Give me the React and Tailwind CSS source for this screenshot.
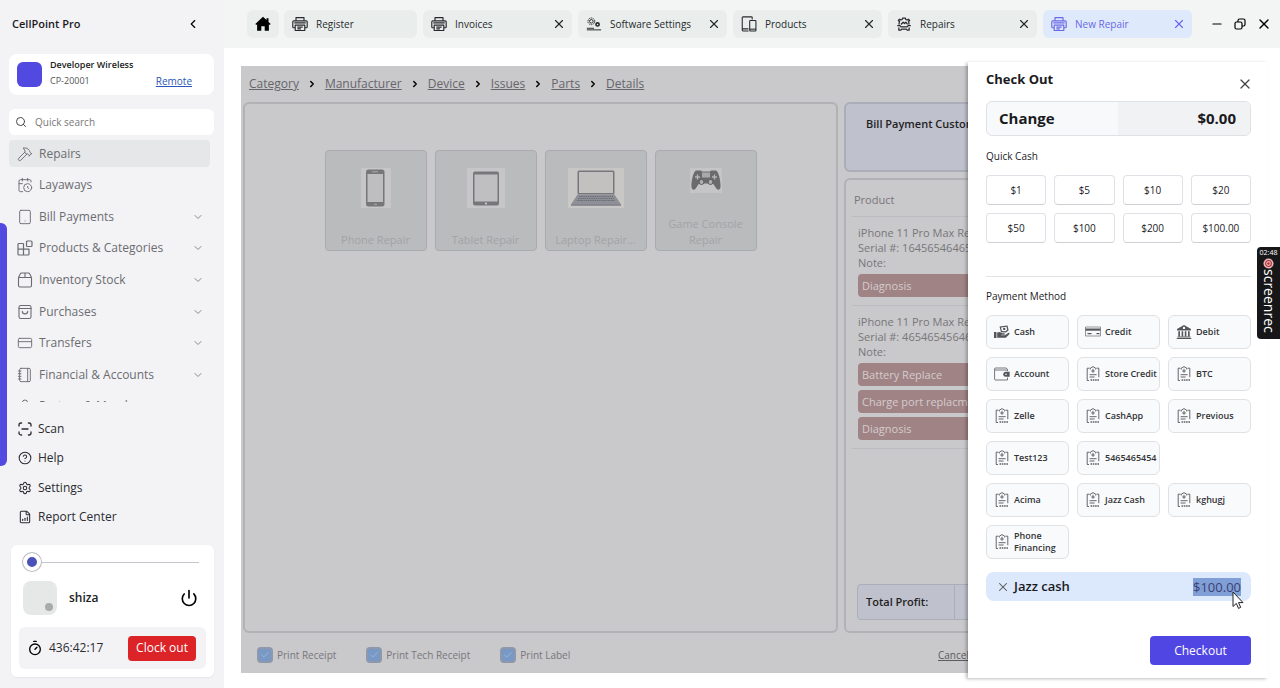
import React, { useState } from 'react';
import {
    CalendarClock, Check, ChevronDown, ChevronLeft, ChevronRight, CreditCard,
    FileChartColumnIncreasing, CircleHelp, Hammer, Minus, Notebook, Power,
    Search, Settings, Tablet, Timer, User, X,
} from 'lucide-react';

const PrinterIcon = ({ className }) => (
    <svg viewBox="0 0 18 18" className={className} fill="none" stroke="currentColor" strokeWidth="1.3" strokeLinejoin="round">
        <path d="M4.5 5.5V1.8h9v3.7M3.6 13.2H1.8a.9.9 0 0 1-.9-.9V6.6c0-.6.5-1.1 1.1-1.1h14c.6 0 1.1.5 1.1 1.1v5.7a.9.9 0 0 1-.9.9h-1.8" />
        <path d="M3.6 10.3h10.8v6H3.6zM6 12.6h6M6 14.4h4M2.6 7.8h12.8" />
    </svg>
);

const GearsIcon = ({ className }) => (
    <svg viewBox="0 0 18 18" className={className} fill="none" stroke="currentColor" strokeWidth="1.1">
        <circle cx="6" cy="6" r="3.8" strokeDasharray="1.6 .8" />
        <circle cx="6" cy="6" r="2" />
        <circle cx="13" cy="9.5" r="1.8" strokeWidth="1.8" />
        <path d="M1 13.8h8M1 15.6h16" />
    </svg>
);

const DevicesIcon = ({ className }) => (
    <svg viewBox="0 0 18 18" className={className} fill="none" stroke="currentColor" strokeWidth="1.2">
        <path d="M8.5 16.8H2.2a.8.8 0 0 1-.8-.8V1.8c0-.4.4-.8.8-.8h9.6c.4 0 .8.4.8.8V4M1.4 14.5h7" />
        <rect x="9.8" y="5" width="7" height="11.8" rx=".6" />
        <path d="M9.8 14.8h7" />
    </svg>
);

const RepairIcon = ({ className }) => (
    <svg viewBox="0 0 18 18" className={className} fill="none" stroke="currentColor" strokeWidth="1.4" strokeLinejoin="round">
        <path d="M3.5 9.8a5.6 5.6 0 0 1 .5-3.600L2.600 5.100l1.500-1.500 1.400.9 1.400-.6.5-1.500h3.200l.5 1.500 1.400.6 1.400-.9 1.500 1.500L14 6.200a5.600 5.600 0 0 1 .5 3.600" />
        <path d="M5.500 9.500 8 7l1.500 1.500L11 7l2 2.500M1.400 10.800h3l1.200 1.500h6.800l1.200-1.500h3M3.200 13v3h2.200l1-1.200h5.200l1 1.200h2.200v-3" />
    </svg>
);

const HomeIcon = ({ className }) => (
    <svg viewBox="0 0 16 16" className={className} fill="currentColor">
        <path d="M8 .8 11.5 4V2.200h2v3.700l2.200 2-1 1.100-.8-.7v6.500H9.700v-4.500H6.300v4.500H2.100V8.300l-.8.700-1-1.100z" />
    </svg>
);

const RestoreIcon = ({ className }) => (
    <svg viewBox="0 0 12 12" className={className} fill="none" stroke="currentColor" strokeWidth="1.2">
        <rect x="1" y="4" width="7" height="7" rx="1.5" />
        <path d="M4 4V2.500C4 1.700 4.700 1 5.500 1h4c.8 0 1.500.7 1.500 1.500v4c0 .8-.7 1.500-1.500 1.500H8" />
    </svg>
);

const ScanIcon = ({ className }) => (
    <svg viewBox="0 0 14 14" className={className} fill="none" stroke="currentColor" strokeWidth="1.3" strokeLinecap="round">
        <path d="M1 4V3a2 2 0 0 1 2-2h.6M10.400 1h.6a2 2 0 0 1 2 2v1M13 10v1a2 2 0 0 1-2 2h-.6M3.600 13H3a2 2 0 0 1-2-2v-1M4 7h6" />
    </svg>
);

const BlocksIcon = ({ className }) => (
    <svg viewBox="0 0 16 16" className={className} fill="none" stroke="currentColor" strokeWidth="1.2" strokeLinejoin="round">
        <rect x="9.5" y="1" width="5.5" height="5.5" rx="1" />
        <path d="M6.500 3.500H2a1 1 0 0 0-1 1V14a1 1 0 0 0 1 1h9a1 1 0 0 0 1-1V9.200H1M6.500 3.500V15" />
    </svg>
);

const BoxIcon = ({ className }) => (
    <svg viewBox="0 0 16 16" className={className} fill="none" stroke="currentColor" strokeWidth="1.1" strokeLinejoin="round">
        <path d="M1.500 5.500v8a1.500 1.500 0 0 0 1.500 1.500h10a1.500 1.500 0 0 0 1.500-1.500v-8M1.500 5.500h13M1.500 5.500l1.700-3.600A1.500 1.500 0 0 1 4.500 1h7a1.500 1.500 0 0 1 1.300.9l1.700 3.600M8 1v4.500" />
    </svg>
);

const BagIcon = ({ className }) => (
    <svg viewBox="0 0 16 16" className={className} fill="none" stroke="currentColor" strokeWidth="1.1" strokeLinecap="round">
        <rect x="2" y="1.5" width="12" height="13" rx="1.8" />
        <path d="M2 4.500h12M5.300 7.200a2.700 2.700 0 0 0 5.400 0" />
    </svg>
);

const CashIcon = ({ className }) => (
    <svg viewBox="0 0 16 14" className={className} fill="currentColor">
        <path d="M5.500 1.500 13.500.4l1.100 4.800-2.600 2.200-5-.2zM7 2.500l.9 3.500 3.600.2 1.700-1.500-.7-3z" fillRule="evenodd" />
        <circle cx="10.2" cy="3.9" r="1.2" />
        <path d="M0 7h2.500v6H0zM3.200 7.600l2.600-.5 2.600 1.200h1.800c.9 0 .9 1.400 0 1.400H7v.5h3.700L14.200 8c.9-.5 1.800.4 1.100 1.200l-3.500 3.600H3.200z" />
    </svg>
);

const CardIcon = ({ className }) => (
    <svg viewBox="0 0 16 12" className={className} fill="none" stroke="currentColor">
        <path d="M.5 1h15v9H.5z" strokeWidth=".6" />
        <path d="M.5 3.600h15" strokeWidth="2.2" />
        <path d="M2.500 7.600h4M11.500 7.600h3" strokeWidth="1.3" />
    </svg>
);

const BankIcon = ({ className }) => (
    <svg viewBox="0 0 16 14" className={className} fill="currentColor">
        <path d="M8 0 15 4v1.500H1V4zm0 1.700A1.200 1.200 0 1 0 8 4.100 1.200 1.200 0 0 0 8 1.700z" fillRule="evenodd" />
        <path d="M2.300 6.200h1.700v5H2.300zM5.600 6.200h1.600v5H5.600zM8.800 6.200h1.600v5H8.800zM12 6.200h1.700v5H12zM1.500 11.600h13v.8h-13zM.7 12.900h14.600v1H.7z" />
    </svg>
);

const WalletIcon = ({ className }) => (
    <svg viewBox="0 0 16 14" className={className} fill="none" stroke="currentColor">
        <path d="M13.500 4V2.500L12.300 1H1.600a1 1 0 0 0-1 1v10a1 1 0 0 0 1 1h11.900v-2.500M1 3h12.500" strokeWidth=".8" />
        <path d="M15.600 4.800h-3.800a2.500 2.500 0 0 0 0 5h3.800z" fill="currentColor" stroke="none" />
        <circle cx="12" cy="7.3" r=".8" fill="#fff" stroke="none" />
    </svg>
);

const InvoiceIcon = ({ className }) => (
    <svg viewBox="0 0 14 16" className={className} fill="none" stroke="currentColor" strokeWidth=".9">
        <path d="M3.500 2.200H1.200v12.300H3M10.500 2.200h2.300v9" />
        <path d="M4.300 3.500V2.200L7 .6l2.700 1.600v1.300M7 2.800v4M5.200 5h3.600" />
        <path d="M3.600 8.700h7M3.600 11h5" />
        <path d="M4.500 14h8.500" strokeWidth="2" strokeDasharray="1.6 .7" strokeOpacity=".7" />
    </svg>
);

const PhonePicture = () => (
    <svg viewBox="0 0 30 40" className="h-10 w-[30px]">
        <rect width="30" height="40" fill="#c6c5c8" />
        <rect x="5" y="1.5" width="18.5" height="37" rx="2.5" fill="#77777a" />
        <rect x="6.5" y="6" width="15.5" height="28" fill="#bebdc0" />
        <path d="M11 3.800h6M13 36.300h3" stroke="#aaa" strokeWidth="1" />
    </svg>
);

const TabletPicture = () => (
    <svg viewBox="0 0 38 40" className="h-10 w-[38px]">
        <rect width="38" height="40" fill="#c6c5c8" />
        <rect x="6" y="3.5" width="26" height="34" rx="2" fill="#77777a" />
        <rect x="7.5" y="6.5" width="23" height="27" fill="#bfbec1" />
        <circle cx="19" cy="35.5" r="1.1" fill="#ccc" />
    </svg>
);

const LaptopPicture = () => (
    <svg viewBox="0 0 56 40" className="h-10 w-14">
        <rect width="56" height="40" fill="#c8c7c6" />
        <rect x="9.5" y="2.5" width="37" height="24" rx="1.5" fill="#77777d" />
        <rect x="11" y="4" width="34" height="21" fill="#c2c1bf" />
        <path d="M9.500 26.500h37L53 36.500H3z" fill="#8f8f97" />
        <path d="M11 28.500h34M10 30.500h36M9 32.500h38" stroke="#6c6c74" strokeDasharray="1.5 .7" />
        <path d="M3 37h50" stroke="#7a7a84" strokeWidth="1.4" />
    </svg>
);

const GamepadPicture = () => (
    <svg viewBox="0 0 32 25" className="h-[25px] w-8">
        <rect width="32" height="25" fill="#c5c4c7" />
        <path d="M6 2.500h5l1 1h8l1-1h5c2 0 5 10 4.500 16.500-.3 3.500-3 3.500-4.500 1L23 15.500H9L6 20c-1.500 2.500-4.200 2.500-4.500-1C1 12.500 4 2.500 6 2.500z" fill="#6b6b6e" />
        <rect x="12" y="4.5" width="8" height="5" fill="#a9a9ac" />
        <circle cx="11.5" cy="14" r="2.5" fill="#aeaeb1" stroke="#5b5b5e" />
        <circle cx="20.5" cy="14" r="2.5" fill="#aeaeb1" stroke="#5b5b5e" />
        <path d="M7.500 6.500v5M5 9h5M24.500 6.500v5M22 9h5" stroke="#b5b5b8" strokeWidth="1.3" />
    </svg>
);

const tabs = [
    { name: 'Register', icon: PrinterIcon, closable: false },
    { name: 'Invoices', icon: PrinterIcon, closable: true },
    { name: 'Software Settings', icon: GearsIcon, closable: true },
    { name: 'Products', icon: DevicesIcon, closable: true },
    { name: 'Repairs', icon: RepairIcon, closable: true },
    { name: 'New Repair', icon: PrinterIcon, closable: true, active: true },
];

const menu = [
    { name: 'Repairs', icon: Hammer, active: true },
    { name: 'Layaways', icon: CalendarClock },
    { name: 'Bill Payments', icon: Tablet, sub: true },
    { name: 'Products & Categories', icon: BlocksIcon, sub: true },
    { name: 'Inventory Stock', icon: BoxIcon, sub: true },
    { name: 'Purchases', icon: BagIcon, sub: true },
    { name: 'Transfers', icon: CreditCard, sub: true },
    { name: 'Financial & Accounts', icon: Notebook, sub: true },
    { name: 'Partner & Members', icon: User },
];

const links = [
    { name: 'Scan', icon: ScanIcon },
    { name: 'Help', icon: CircleHelp },
    { name: 'Settings', icon: Settings },
    { name: 'Report Center', icon: FileChartColumnIncreasing },
];

const steps = ['Category', 'Manufacturer', 'Device', 'Issues', 'Parts', 'Details'];

const categories = [
    { name: 'Phone Repair', picture: PhonePicture },
    { name: 'Tablet Repair', picture: TabletPicture },
    { name: 'Laptop Repair...', picture: LaptopPicture },
    { name: 'Game Console Repair', picture: GamepadPicture },
];

const products = [
    { name: 'iPhone 11 Pro Max Repair', serial: '16456546465', issues: ['Diagnosis'] },
    { name: 'iPhone 11 Pro Max Repair', serial: '46546545646', issues: ['Battery Replace', 'Charge port replacment', 'Diagnosis'] },
];

const quickCash = ['$1', '$5', '$10', '$20', '$50', '$100', '$200', '$100.00'];

const payments = [
    [{ name: 'Cash', icon: CashIcon }, { name: 'Credit', icon: CardIcon }, { name: 'Debit', icon: BankIcon }],
    [{ name: 'Account', icon: WalletIcon }, { name: 'Store Credit' }, { name: 'BTC' }],
    [{ name: 'Zelle' }, { name: 'CashApp' }, { name: 'Previous' }],
    [{ name: 'Test123' }, { name: '5465465454' }],
    [{ name: 'Acima' }, { name: 'Jazz Cash' }, { name: 'kghugj' }],
    [{ name: 'Phone Financing' }],
];

const Sidebar = () => {
    const [level, setLevel] = useState(0);

    return (
        <aside className="relative flex w-56 shrink-0 flex-col bg-[#f3f3f6]">
            <div className="flex h-12 items-center justify-between pl-3 pr-6">
                <h1 className="text-[11px] font-semibold text-[#1b1b1f]">CellPoint Pro</h1>
                <button aria-label="Collapse"><ChevronLeft className="size-3.5" /></button>
            </div>

            <div className="ml-[9px] mr-2.5 mt-1.5 flex h-[41px] items-center rounded-lg bg-white pl-2">
                <div className="size-[25px] rounded-md bg-[#5249e0]"></div>
                <div className="ml-2 flex-1 pb-1 text-[9px] leading-4">
                    <p className="font-semibold text-[#222]">Developer Wireless</p>
                    <div className="flex justify-between pr-[22px] text-[#555]">
                        <span>CP-20001</span>
                        <a href="#remote" className="text-[10px] text-[#2b55b8] underline">Remote</a>
                    </div>
                </div>
            </div>

            <label className="ml-[9px] mr-2.5 mt-3.5 flex h-[26px] shrink-0 items-center rounded-md bg-white pl-1.5">
                <Search className="size-3 text-[#444]" strokeWidth={2} />
                <input aria-label="Quick search" placeholder="Quick search" className="ml-2 w-40 text-[10px] outline-none placeholder:text-[#777]" />
            </label>

            <div className="mt-[3px] h-[264px] shrink-0 overflow-hidden">
                <ul className="flex h-[284px] flex-col">
                    {menu.map((item) => (
                        <li key={item.name} className="flex flex-1 items-center">
                            <button className={`ml-[9px] mr-3.5 flex h-[27px] w-full items-center rounded-sm pl-2 pr-1.5 text-[12px] text-[#6b6c70] ${item.active ? 'bg-[#e6e7e9]' : ''}`}>
                                <item.icon className="size-4" strokeWidth={1.4} />
                                <span className="ml-1.5">{item.name}</span>
                                {item.sub && <ChevronDown className="ml-auto size-3" strokeWidth={1.6} />}
                            </button>
                        </li>
                    ))}
                </ul>
            </div>

            <ul className="mt-3 flex h-[118px] shrink-0 flex-col">
                {links.map((item) => (
                    <li key={item.name} className="flex flex-1 items-center">
                        <button className="flex items-center pl-[18px] text-[12px] text-[#2b2c30]">
                            <item.icon className="size-3.5" strokeWidth={1.8} />
                            <span className="ml-1.5">{item.name}</span>
                        </button>
                    </li>
                ))}
            </ul>

            <div className="ml-[11px] mr-2.5 mt-[13px] rounded-md bg-white px-2 pb-2 pt-2 shadow-xs">
                <input
                    type="range"
                    aria-label="Level"
                    value={level}
                    onChange={(e) => setLevel(e.target.value)}
                    className="ml-1 block h-[18px] w-[176px] appearance-none bg-[linear-gradient(#c5c6d0,#c5c6d0)] bg-[length:100%_1px] bg-center bg-no-repeat [&::-webkit-slider-thumb]:size-[18px] [&::-webkit-slider-thumb]:appearance-none [&::-webkit-slider-thumb]:rounded-full [&::-webkit-slider-thumb]:border-4 [&::-webkit-slider-thumb]:border-white [&::-webkit-slider-thumb]:bg-[#4a52b8] [&::-webkit-slider-thumb]:shadow-[0_0_0_1px_#bbbcc4]"
                />
                <div className="mt-2.5 flex items-center pl-1 pr-2">
                    <div className="flex size-[34px] items-end justify-end rounded-lg bg-[#e6e8e8] p-1">
                        <span className="size-2 rounded-full bg-[#a9aaaa]"></span>
                    </div>
                    <span className="ml-3 text-[12px] font-semibold text-[#222]">shiza</span>
                    <button aria-label="Log off" className="ml-auto"><Power className="size-[18px]" strokeWidth={2.2} /></button>
                </div>
                <div className="mt-3 flex h-[42px] items-center rounded-md bg-[#f3f3f6] pl-2 pr-2.5">
                    <Timer className="size-4" strokeWidth={2} />
                    <span className="ml-1.5 text-[12px] text-[#2b2c30]">436:42:17</span>
                    <button className="ml-auto h-[25px] w-[68px] rounded-sm bg-[#dc2328] text-[12px] text-white">Clock out</button>
                </div>
            </div>

            <div className="absolute left-0 top-[223px] h-[243px] w-[7px] rounded-r-md bg-[#5249e0]"></div>
        </aside>
    );
};

const TabBar = () => (
    <header className="flex h-12 shrink-0 items-center bg-[#f3f4f4] pl-[23px] pr-2">
        <button aria-label="Home" className="flex h-7 w-8 items-center justify-center rounded-md bg-[#e9eeec]">
            <HomeIcon className="size-4 text-black" />
        </button>
        <nav className="ml-[5px] flex flex-1 gap-1.5 text-[10px]">
            {tabs.map((tab) => (
                <div
                    key={tab.name}
                    className={`flex h-7 items-center rounded-md pl-2 pr-1.5 ${tab.closable ? 'w-[149px]' : 'w-[133px]'} ${tab.active ? 'bg-[#deeafb] text-[#6a68e6]' : 'bg-[#e9eeec] text-[#28292c]'}`}
                >
                    <tab.icon className="size-4" />
                    <a href="#tab" className="ml-2">{tab.name}</a>
                    {tab.closable && <button aria-label={'Close ' + tab.name} className="ml-auto"><X className="size-3.5" strokeWidth={2} /></button>}
                </div>
            ))}
        </nav>
        <div className="flex items-center gap-2.5">
            <button aria-label="Minimize"><Minus className="size-3.5" /></button>
            <button aria-label="Restore"><RestoreIcon className="size-3" /></button>
            <button aria-label="Close window"><X className="size-4" /></button>
        </div>
    </header>
);

const PrintOption = ({ name }) => {
    const [checked, setChecked] = useState(true);

    return (
        <label className="flex items-center">
            <span className="grid size-4 place-items-center">
                <input
                    type="checkbox"
                    checked={checked}
                    onChange={() => setChecked(!checked)}
                    className="col-start-1 row-start-1 size-4 appearance-none rounded-sm border-2 border-[#8e98aa] bg-[#b9bac0] checked:bg-[#7898c6]"
                />
                {checked && <Check className="pointer-events-none col-start-1 row-start-1 size-2.5 text-[#a5b9d8]" />}
            </span>
            <span className="ml-1">{name}</span>
        </label>
    );
};

const RepairPage = () => (
    <main className="flex min-w-0 flex-1 flex-col bg-[#c9c8cb] pl-0.5 pr-1 text-[#77777a]">
        <nav className="flex h-9 shrink-0 items-center gap-2 pl-1.5 text-[12px] text-[#66666a]">
            {steps.map((step, index) => (
                <React.Fragment key={step}>
                    {index > 0 && <ChevronRight className="size-2.5 text-black" strokeWidth={3.5} />}
                    <a href="#step" className="underline">{step}</a>
                </React.Fragment>
            ))}
        </nav>
        <div className="grid min-h-0 flex-1 grid-cols-[595fr_420fr] gap-1.5">
            <section className="flex items-start justify-center gap-2 rounded-md border-2 border-[#b2b1b5] pt-[46px]">
                {categories.map((category) => (
                    <button key={category.name} className="flex h-[101px] w-[102px] flex-col items-center rounded-sm border border-[#a9abaf] bg-[#babbbd] px-2 pb-0.5 pt-[17px] text-[11px] leading-4 text-[#a2a3a6]">
                        <category.picture />
                        <span className="mt-auto">{category.name}</span>
                    </button>
                ))}
            </section>
            <section className="flex flex-col">
                <div className="h-[70px] rounded-md border-2 border-[#abadb9] bg-[#bfc1cd] px-5 pt-3 text-[11px] font-semibold text-[#1f1f24]">Bill Payment Customer</div>
                <div className="mt-1.5 flex flex-1 flex-col rounded-md border-2 border-[#b2b1b5] px-1.5 text-[11px]">
                    <h2 className="h-[37px] border-b border-[#bcbbbf] pl-0.5 pt-3">Product</h2>
                    {products.map((product) => (
                        <div key={product.serial} className="border-b border-[#bcbbbf] pb-2 pl-1.5 pt-2">
                            <div className="leading-[15px]">
                                <p>{product.name}</p>
                                <p>Serial #: {product.serial}</p>
                                <p>Note:</p>
                            </div>
                            <ul className="mt-1 flex flex-col gap-1">
                                {product.issues.map((issue) => (
                                    <li key={issue} className="h-[23px] rounded-sm bg-[#a08385] pl-1 leading-[23px] text-[#d4cccd]">{issue}</li>
                                ))}
                            </ul>
                        </div>
                    ))}
                    <div className="mb-[11px] ml-[5px] mt-auto flex h-9 items-center rounded-sm border border-[#abadb9] bg-[#bfc1cd] font-semibold text-[#1f1f24]">
                        <span className="flex h-full w-[97px] items-center border-r border-[#abadb9] pl-2">Total Profit:</span>
                    </div>
                </div>
            </section>
        </div>
        <footer className="grid h-10 shrink-0 grid-cols-[595fr_420fr] items-center gap-1.5 text-[10px]">
            <div className="flex gap-[30px] pl-3.5 pt-1">
                <PrintOption name="Print Receipt" />
                <PrintOption name="Print Tech Receipt" />
                <PrintOption name="Print Label" />
            </div>
            <div className="pl-[94px] pt-1">
                <a href="#cancel" className="text-[#5b5b60] underline">Cancel</a>
            </div>
        </footer>
    </main>
);

const Checkout = () => (
    <aside aria-label="Check Out" className="absolute bottom-2.5 right-3 top-[62px] flex w-[300px] flex-col bg-white pl-[18px] pr-[17px] text-[#1b1b1f] shadow-[-2px_1px_3px_rgba(0,0,0,0.25)]">
        <div className="flex h-[39px] shrink-0 items-center justify-between">
            <h2 className="pb-1 text-[13px] font-bold">Check Out</h2>
            <button aria-label="Close" className="pt-1"><X className="-mr-0.5 size-4 text-[#444]" strokeWidth={1.8} /></button>
        </div>
        <div className="flex h-[35px] shrink-0 items-center rounded-md border border-[#e0e1e4] bg-[#f8f9fa] text-[15px] font-bold">
            <span className="flex-1 pl-3">Change</span>
            <span className="flex h-full flex-1 items-center justify-end rounded-r-md bg-[#f1f2f4] pr-3.5">$0.00</span>
        </div>
        <h3 className="mt-2.5 text-[10px] font-medium leading-5">Quick Cash</h3>
        <div className="mt-[9px] grid grid-cols-4 gap-2">
            {quickCash.map((amount) => (
                <button key={amount} className="h-[30px] rounded-sm border border-[#e0e1e6] border-b-[#cfd0d6] text-[10px]">{amount}</button>
            ))}
        </div>
        <hr className="mt-[33px] border-[#e2e3e6]" />
        <h3 className="mt-[9px] text-[10px] font-medium leading-5">Payment Method</h3>
        <div className="mt-[9px] flex flex-col gap-2">
            {payments.map((row) => (
                <div key={row[0].name} className="grid grid-cols-3 gap-2">
                    {row.map((method) => {
                        const Icon = method.icon || InvoiceIcon;
                        return (
                            <button key={method.name} className="flex h-[34px] items-center rounded-md border border-[#e0e1e4] bg-[#f9fafb] pl-[7px] text-left text-[9px] font-semibold leading-3 text-[#333438]">
                                <Icon className="size-4 shrink-0 text-[#55565a]" />
                                <span className="ml-1">{method.name}</span>
                            </button>
                        );
                    })}
                </div>
            ))}
        </div>
        <div className="mt-[13px] flex h-[29px] shrink-0 items-center rounded-lg bg-[#dce8fb] px-2.5 text-[13px] font-semibold">
            <button aria-label="Remove Jazz cash"><X className="size-3.5 text-[#555]" strokeWidth={1.8} /></button>
            <span className="ml-1">Jazz cash</span>
            <span className="ml-auto bg-[#7f9fd6] font-normal leading-[18px] text-[#3c3f74]">$100.00</span>
        </div>
        <button className="mb-[13px] ml-auto mt-auto h-[29px] w-[101px] shrink-0 rounded-sm bg-[#5046e4] text-[12px] text-white">Checkout</button>
    </aside>
);

const App = () => {
    return (
        <div className="relative flex h-screen overflow-hidden bg-white font-['Open_Sans','Noto_Sans',sans-serif]">
            <Sidebar />
            <div className="flex min-w-0 flex-1 flex-col">
                <TabBar />
                <div className="flex min-h-0 flex-1 pb-[15px] pl-[17px] pr-3 pt-[18px]">
                    <RepairPage />
                </div>
            </div>
            <Checkout />

            <div className="absolute right-0 top-[247px] flex h-[92px] w-[23px] flex-col items-center rounded-l-sm bg-[#17171a] text-white">
                <span className="text-[7px] leading-[11px]">02:48</span>
                <svg viewBox="0 0 12 12" className="size-[11px] shrink-0">
                    <circle cx="6" cy="6" r="5.5" fill="#e9b5b5" />
                    <circle cx="6" cy="6" r="3.2" fill="#e9b5b5" stroke="#b03038" strokeWidth="1.2" />
                    <circle cx="6" cy="6" r="1.3" fill="#b03038" />
                </svg>
                <span className="text-[14px] leading-[22px] [writing-mode:vertical-rl]">screenrec</span>
            </div>
            <svg viewBox="0 0 12 19" className="absolute left-[1232px] top-[591px] h-[19px] w-3">
                <path d="M1 1v14.500l3.300-3.100 2.200 5 2.200-1-2.200-4.800h4.500z" fill="#fff" stroke="#222" strokeLinejoin="round" />
            </svg>
        </div>
    );
};

export default App;
